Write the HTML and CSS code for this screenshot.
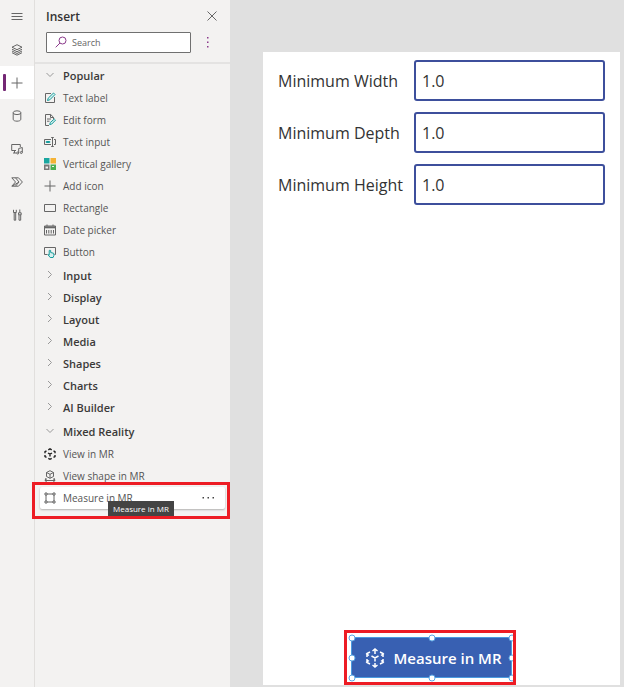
FILE: index.html
```html
<!DOCTYPE html>
<html lang="en">
<head>
<meta charset="utf-8">
<title>Insert</title>
<link rel="stylesheet" href="styles.css">
</head>
<body>
<nav class="rail" aria-label="Main">
  <button class="rail-item" aria-label="Menu"><svg viewBox="0 0 12 12"><path d="M.5 2.5h11M.5 5.5h11M.5 8.5h11"/></svg></button>
  <button class="rail-item" aria-label="Tree view"><svg viewBox="0 0 12 12"><path d="M6 .7l5 2.500L6 5.700 1 3.200zM1 5.200l5 2.500 5-2.500M1 7l5 2.500L11 7M1 8.700l5 2.500 5-2.500"/></svg></button>
  <button class="rail-item active" aria-label="Insert"><svg viewBox="0 0 12 12"><path d="M6 .5v11M.5 6h11"/></svg></button>
  <button class="rail-item" aria-label="Data"><svg viewBox="0 0 12 12"><ellipse cx="6" cy="2.700" rx="3.800" ry="1.900"/><path d="M2.200 2.700v6.600c0 2.500 7.600 2.500 7.600 0V2.700"/></svg></button>
  <button class="rail-item" aria-label="Media"><svg viewBox="0 0 12 12"><path d="M5 7.500H.7v-6h8.600V4M2 10h3.500M3.500 7.500V10M7.700 10V5.500l3.600-1v5"/><circle cx="6.700" cy="10" r="1"/><circle cx="10.300" cy="9.500" r="1"/></svg></button>
  <button class="rail-item" aria-label="Power Automate"><svg viewBox="0 0 12 12"><path d="M.8 1.800h6.700L11.400 6l-3.900 4.200H.8L4.500 6zM4.500 1.800L8 6l-6.500 4M8 6l-3.500 4.200"/></svg></button>
  <button class="rail-item" aria-label="Advanced tools"><svg viewBox="0 0 12 12"><path d="M2.500.8v2.700h2.800V.8M3.200 3.500v7.700h1.500V3.500M8.800.5v3.300M7.500 3.800h2.700v2H7.500zM8 5.800v5.400h1.700V5.800"/></svg></button>
</nav>

<aside class="panel">
  <header class="panel-head">
    <h1>Insert</h1>
    <button class="icon-button" aria-label="Close"><svg viewBox="0 0 12 12"><path d="M1.500 1.500l9 9M10.500 1.500l-9 9"/></svg></button>
  </header>
  <div class="search-row">
    <label class="search">
      <svg viewBox="0 0 12 12"><circle cx="7.500" cy="4.500" r="3.500"/><path d="M5 7L.7 11.300"/></svg>
      <input type="text" placeholder="Search" aria-label="Search">
    </label>
    <button class="icon-button more" aria-label="More options"><svg viewBox="0 0 12 12"><path d="M5 1h1.500v1.500H5zM5 5.500h1.500V7H5zM5 10h1.500v1.500H5z"/></svg></button>
  </div>

  <div class="tree">
    <section class="group open">
      <h2><svg viewBox="0 0 12 12"><path d="M2.500 4L6 7.500 9.500 4"/></svg>Popular</h2>
      <ul>
        <li><svg viewBox="0 0 12 12"><path d="M7 1.500H1.500v9h9V5"/><path class="teal" d="M3.500 8.500l.7-2.300L9.500 1l1.500 1.500-5.200 5.300z"/></svg>Text label</li>
        <li><svg viewBox="0 0 12 12"><path d="M5 11.500H1.500v-11h5.200L9.500 3.300V5M6.500.5v3h3M3 5h4M3 7.200h2.500"/><path class="teal" d="M5.700 10.500l.6-2 4-3.500 1.200 1.200-3.800 3.900z"/></svg>Edit form</li>
        <li><svg viewBox="0 0 12 12"><path d="M7 3.500H.5v5H7M10 3.500h1.500v5H10M7.200 1.500h2.600M7.200 10.500h2.600M8.500 1.500v9"/><path class="teal" d="M2.200 5.500h3.600v1H2.200z"/></svg>Text input</li>
        <li><svg class="blocks" viewBox="0 0 12 12"><path fill="#1aa6a0" d="M0 0h5.500v5.500H0z"/><path fill="#f5b335" d="M6.500 0H12v5.500H6.500z"/><path fill="#777" d="M0 6.500h5.500V12H0z"/><path fill="#4caf50" d="M6.500 6.500H12V12H6.500z"/><path fill="#f3f2f1" d="M1.500 8.500h2.500v2H1.500zM8 8h2v1H8z"/></svg>Vertical gallery</li>
        <li><svg viewBox="0 0 12 12"><path d="M6 .5v11M.5 6h11"/></svg>Add icon</li>
        <li><svg viewBox="0 0 12 12"><path d="M.5 2.500h11v7H.5z"/></svg>Rectangle</li>
        <li><svg viewBox="0 0 12 12"><path d="M.5 2h11v9H.5zM3 .5V2M9 .5V2M2.500 6v3.500M4.800 6v3.500M7.200 6v3.500M9.500 6v3.500"/><path d="M.5 3.300h11" stroke-width="2"/></svg>Date picker</li>
        <li><svg viewBox="0 0 12 12"><path d="M3.500 8.500h-3v-7h11v7h-1"/><path class="teal" d="M5.200 9V4.500q.8-.8 1.500 0v2l3 .8q.8 2-.6 4.200H6.200L4 8.700z"/></svg>Button</li>
      </ul>
    </section>
    <section class="group"><h2><svg viewBox="0 0 12 12"><path d="M4 2l3.500 3.500L4 9"/></svg>Input</h2></section>
    <section class="group"><h2><svg viewBox="0 0 12 12"><path d="M4 2l3.500 3.500L4 9"/></svg>Display</h2></section>
    <section class="group"><h2><svg viewBox="0 0 12 12"><path d="M4 2l3.500 3.500L4 9"/></svg>Layout</h2></section>
    <section class="group"><h2><svg viewBox="0 0 12 12"><path d="M4 2l3.500 3.500L4 9"/></svg>Media</h2></section>
    <section class="group"><h2><svg viewBox="0 0 12 12"><path d="M4 2l3.500 3.500L4 9"/></svg>Shapes</h2></section>
    <section class="group"><h2><svg viewBox="0 0 12 12"><path d="M4 2l3.500 3.500L4 9"/></svg>Charts</h2></section>
    <section class="group"><h2><svg viewBox="0 0 12 12"><path d="M4 2l3.500 3.500L4 9"/></svg>AI Builder</h2></section>
    <section class="group open">
      <h2><svg viewBox="0 0 12 12"><path d="M2.500 4L6 7.500 9.500 4"/></svg>Mixed Reality</h2>
      <ul>
        <li><svg class="strong" viewBox="0 0 12 12"><path d="M4.300 1.800L6 .8l1.700 1M9.500 2.800l1.500.9v1.600M11 7v1.500l-1.500.8M7.700 10.300L6 11.300l-1.700-1M2.500 9.300L1 8.500V7M1 5.300V3.700l1.500-.9M4 5l2 1.200L8 5M6 6.200v2.300"/></svg>View in MR</li>
        <li><svg viewBox="0 0 12 12"><path d="M6 .7l3.500 1.800v4L6 8.300 2.500 6.500v-4zM2.500 2.500L6 4.300l3.500-1.800M6 4.300v4M2 8L1 10.500h10L10 8M2.800 9L1 10.500l1.800 1.500M9.200 9l1.800 1.500L9.200 12"/></svg>View shape in MR</li>
        <li class="selected"><svg viewBox="0 0 12 12"><path d="M2 3v6M10 3v6M3 2h6M3 10h6M1 1h2v2H1zM9 1h2v2H9zM1 9h2v2H1zM9 9h2v2H9z"/></svg>Measure in MR<button class="row-more" aria-label="More actions"><svg viewBox="0 0 12 12"><path d="M.5 5h1.500v1.500H.5zM5.500 5H7v1.500H5.500zM10.500 5H12v1.500h-1.500z"/></svg></button><span class="tooltip" role="tooltip">Measure in MR</span></li>
      </ul>
    </section>
  </div>
</aside>

<main class="canvas">
  <div class="screen">
    <form class="fields">
      <label for="min-width">Minimum Width</label><input id="min-width" type="text" value="1.0">
      <label for="min-depth">Minimum Depth</label><input id="min-depth" type="text" value="1.0">
      <label for="min-height">Minimum Height</label><input id="min-height" type="text" value="1.0">
    </form>
    <div class="control">
      <button class="measure"><svg viewBox="0 0 20 20"><path d="M10 1v5M7.500 3L10 1l2.500 2M10 19v-4M7.500 17l2.500 2 2.500-2M2 9V5.500L5 4M1 5.500l3 2M18 9V5.500L15 4M19 5.500l-3 2M2 11v3.500L5 16M1 14.500l3-2M18 11v3.500L15 16M19 14.500l-3-2M6.500 8L10 10l3.500-2M10 10v3.500"/></svg>Measure in MR</button>
      <i class="handle nw"></i><i class="handle n"></i><i class="handle ne"></i>
      <i class="handle w"></i><i class="handle e"></i>
      <i class="handle sw"></i><i class="handle s"></i><i class="handle se"></i>
    </div>
  </div>
</main>
</body>
</html>
```
FILE: styles.css
```css
* { box-sizing: border-box; }

body {
  margin: 0;
  min-height: 100vh;
  display: grid;
  grid-template-columns: 35px 195px 1fr;
  background: #e0e0e0;
  color: #444;
  font-family: "Open Sans", "Noto Sans", sans-serif;
  font-size: 10px;
}

button {
  border: 0;
  padding: 0;
  background: none;
  color: inherit;
  font: inherit;
}

svg {
  width: 12px;
  height: 12px;
  flex: none;
  display: block;
  fill: none;
  stroke: #666;
  stroke-width: 1;
  overflow: visible;
}

/* Navigation rail */
.rail {
  display: flex;
  flex-direction: column;
  background: #f3f2f1;
  border-right: 1px solid #e1dfdd;
}

.rail-item {
  height: 33px;
  display: grid;
  place-items: center;
  position: relative;
}

.rail-item.active { background: #fff; }

.rail-item.active::before {
  content: "";
  position: absolute;
  left: 3px;
  top: 8px;
  width: 3px;
  height: 17px;
  border-radius: 1px;
  background: #742774;
}

/* Insert panel */
.panel { background: #f3f2f1; }

.panel-head {
  display: flex;
  align-items: center;
  justify-content: space-between;
  height: 32px;
  padding: 0 12px 0 11px;
}

h1 {
  margin: 0;
  font-size: 12px;
  font-weight: 600;
  color: #333;
}

.search-row {
  display: flex;
  align-items: center;
  gap: 11px;
  height: 32px;
  padding: 0 16px 10px 11px;
  border-bottom: 2px solid #e4e3e2;
}

.search {
  flex: 1;
  display: flex;
  align-items: center;
  gap: 5px;
  height: 21px;
  padding-left: 8px;
  background: #fff;
  border: 1px solid #707070;
  border-radius: 1px;
}

.search svg { stroke: #8b3a8b; }

.search input {
  flex: 1;
  min-width: 0;
  padding: 0;
  border: 0;
  outline: 0;
  background: none;
  font: inherit;
  font-size: 9px;
}

.search input::placeholder { color: #666; }

.more svg { fill: #8b3a8b; stroke: none; }

.group.open { padding-bottom: 1px; }
.group:not(.open) + .open { padding-top: 2px; }

h2, li {
  display: flex;
  align-items: center;
  gap: 7px;
  height: 22px;
  margin: 0;
  padding-left: 9px;
}

h2 {
  font-size: 11px;
  font-weight: 600;
  color: #3b3a39;
}

h2 svg { stroke: #999; }

ul {
  margin: 0;
  padding: 1px 0 0;
  list-style: none;
}

li { color: #555; }

.teal { stroke: #169c9c; fill: #d5f0ef; }
.blocks { stroke: none; }
.strong { stroke: #222; stroke-width: 1.4; }

.selected {
  position: relative;
  margin: 0 5px;
  padding: 0 11px 0 4px;
  background: #fff;
  border-radius: 2px;
  box-shadow: 0 1px 2px #0004;
}

.selected::after,
.control::after {
  content: "";
  position: absolute;
  border: 3px solid #ed1c24;
  pointer-events: none;
}

.selected::after { inset: -5px -5px -10px -8px; }

.row-more { margin-left: auto; }
.row-more svg { fill: #444; stroke: none; }

.tooltip {
  position: absolute;
  left: 68px;
  top: 14px;
  padding: 0 5px;
  background: #444;
  color: #fff;
  font-size: 8px;
  line-height: 16px;
  white-space: nowrap;
}

/* App canvas */
.canvas {
  display: flex;
  padding: 52px 4px 2px 33px;
}

.screen {
  flex: 1;
  display: flex;
  flex-direction: column;
  justify-content: space-between;
  padding: 8px 15px 7px;
  background: #fff;
}

.fields {
  display: grid;
  grid-template-columns: 125px 1fr;
  gap: 11px;
  align-items: center;
  font-size: 16px;
  color: #333;
}

.fields input {
  width: 100%;
  height: 41px;
  padding: 0 6px;
  border: 2px solid #3d4f9c;
  border-radius: 3px;
  background: #fff;
  color: #333;
  font: inherit;
}

.control {
  position: relative;
  align-self: center;
  margin-right: 20px;
}

.control::after { inset: -7px -4px -7px -7px; }

.measure {
  display: flex;
  align-items: center;
  gap: 8px;
  height: 41px;
  padding: 0 9px 0 13px;
  border: 1px solid #4a9be0;
  background: #3860b2;
  color: #fff;
  font-size: 15px;
  font-weight: 600;
}

.measure svg {
  width: 20px;
  height: 20px;
  stroke: #fff;
  stroke-width: 1.5;
}

.handle {
  position: absolute;
  width: 7px;
  height: 7px;
  border: 1px solid #5ba7e5;
  border-radius: 50%;
  background: #fff;
  transform: translate(-50%, -50%);
}

.nw, .w, .sw { left: 1px; }
.n, .s { left: 50%; }
.ne, .e, .se { left: 100%; }
.nw, .n, .ne { top: 1px; }
.w, .e { top: 50%; }
.sw, .s, .se { top: 100%; }
```
